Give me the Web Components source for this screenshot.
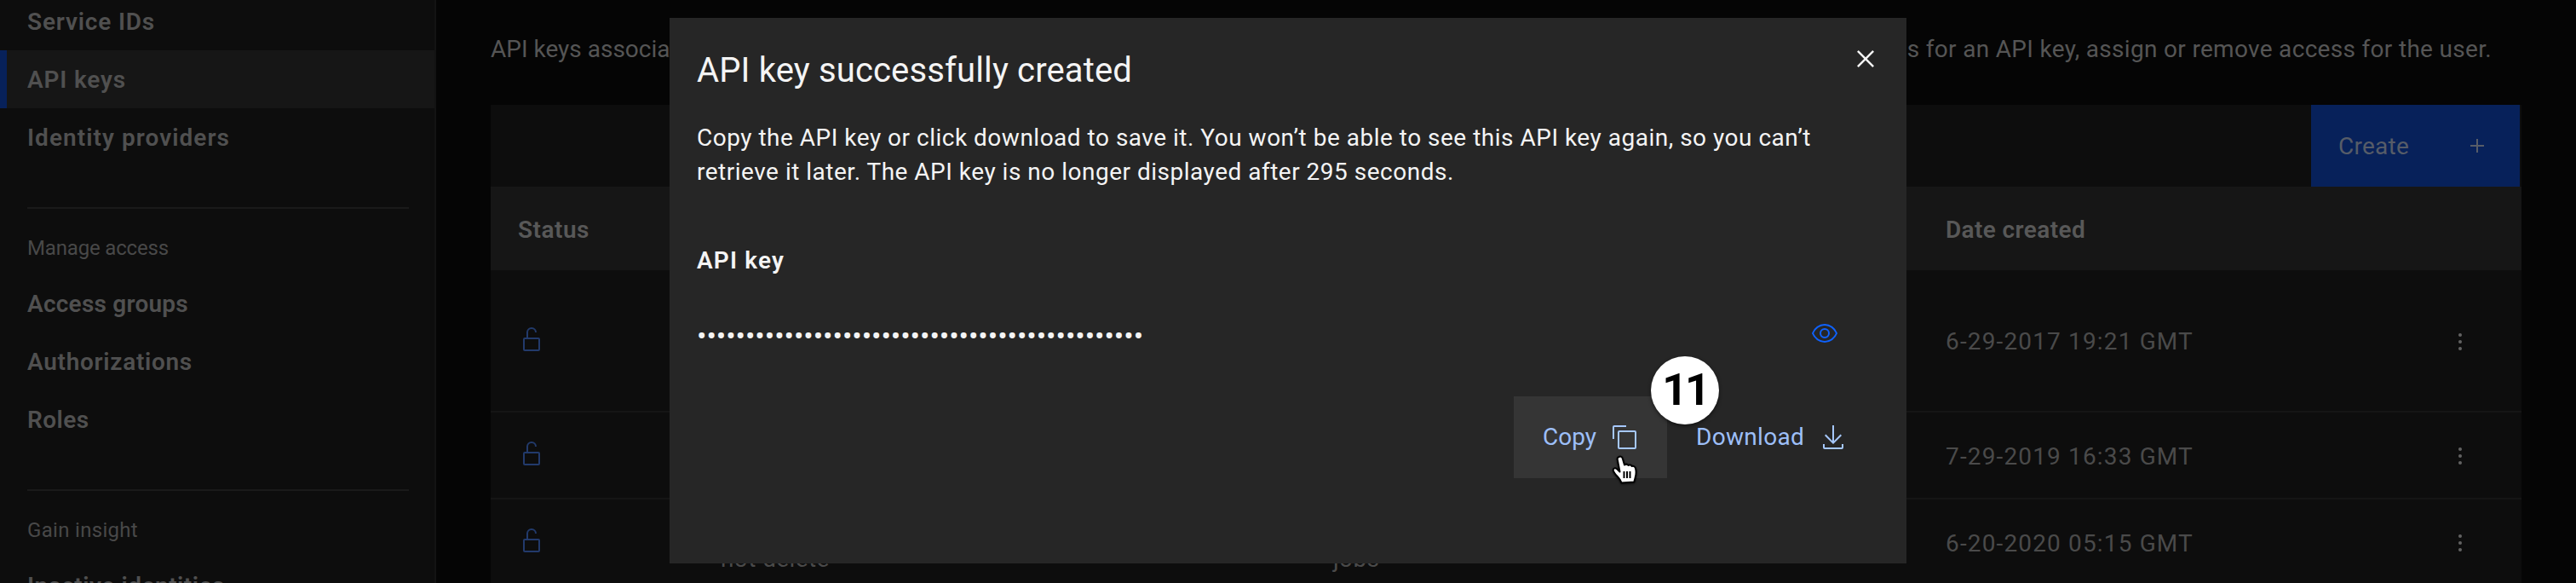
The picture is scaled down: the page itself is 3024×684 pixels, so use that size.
<!DOCTYPE html><html><head><meta charset="utf-8"><style>
html,body{margin:0;padding:0;background:#050505;overflow:hidden}
body{font-family:Roboto,"Liberation Sans",sans-serif}
</style></head><body>
<iam-page>
  <iam-sidebar slot="side">
    <nav-item ls=".81">Service IDs</nav-item>
    <nav-item ls=".83" active>API keys</nav-item>
    <nav-item ls="1.05">Identity providers</nav-item>
    <nav-section ls="-.17">Manage access</nav-section>
    <nav-item ls=".23">Access groups</nav-item>
    <nav-item ls=".7">Authorizations</nav-item>
    <nav-item ls=".45">Roles</nav-item>
    <nav-section ls=".31">Gain insight</nav-section>
    <nav-item ls=".5">Inactive identities</nav-item>
  </iam-sidebar>
  <keys-panel slot="main"></keys-panel>
  <key-modal slot="over"></key-modal>
</iam-page>
<script>
const ICON={
 lock:'<path d="M24 14H12V8a4 4 0 0 1 8 0h2a6 6 0 0 0-12 0v6H8a2 2 0 0 0-2 2v12a2 2 0 0 0 2 2h16a2 2 0 0 0 2-2V16a2 2 0 0 0-2-2zm0 14H8V16h16z"/>',
 kebab:'<circle cx="16" cy="8" r="2"/><circle cx="16" cy="16" r="2"/><circle cx="16" cy="24" r="2"/>',
 add:'<path d="M17 15V8h-2v7H8v2h7v7h2v-7h7v-2h-7z"/>',
 close:'<path d="M24 9.4L22.6 8 16 14.6 9.4 8 8 9.4 14.6 16 8 22.6 9.4 24 16 17.4 22.6 24 24 22.6 17.4 16 24 9.4z"/>',
 view:'<path d="M30.94 15.66A16.69 16.69 0 0 0 16 5 16.69 16.69 0 0 0 1.06 15.66a1 1 0 0 0 0 .68A16.69 16.69 0 0 0 16 27a16.69 16.69 0 0 0 14.94-10.66 1 1 0 0 0 0-.68zM16 25c-5.3 0-10.9-3.93-12.93-9C5.1 10.93 10.7 7 16 7s10.9 3.93 12.93 9C26.9 21.07 21.3 25 16 25z"/><path d="M16 10a6 6 0 1 0 6 6 6 6 0 0 0-6-6zm0 10a4 4 0 1 1 4-4 4 4 0 0 1-4 4z"/>',
 copy:'<path d="M28 10v18H10V10h18m0-2H10a2 2 0 0 0-2 2v18a2 2 0 0 0 2 2h18a2 2 0 0 0 2-2V10a2 2 0 0 0-2-2z"/><path d="M4 18H2V4a2 2 0 0 1 2-2h14v2H4z"/>',
 download:'<path d="M26 24v4H6v-4H4v4a2 2 0 0 0 2 2h20a2 2 0 0 0 2-2v-4z"/><path d="M26 14l-1.41-1.41L17 20.17V2h-2v18.17l-7.59-7.58L6 14l10 10 10-10z"/>'
};
function icon(n,s=32,c='currentColor'){return `<svg width="${s}" height="${s}" viewBox="0 0 32 32" fill="${c}" style="display:block;flex:none">${ICON[n]}</svg>`}
class Base extends HTMLElement{
 render(html){if(!this.shadowRoot)this.attachShadow({mode:'open'});this.shadowRoot.innerHTML=html}
}
customElements.define('iam-page',class extends Base{connectedCallback(){this.render(`<style>
 :host{display:grid;grid-template-columns:512px 1fr;width:3024px;height:684px;overflow:hidden;position:relative;background:#050505}
 </style><slot name="side"></slot><slot name="main"></slot><slot name="over"></slot>`)}});
customElements.define('iam-sidebar',class extends Base{connectedCallback(){this.render(`<style>
 :host{display:block;height:684px;overflow:hidden;background:#0d0d0d;box-shadow:inset -2px 0 0 #131313}
 .list{display:flex;flex-direction:column;margin-top:-9px}
 </style><div class="list"><slot></slot></div>`)}});
customElements.define('nav-item',class extends Base{connectedCallback(){const a=this.hasAttribute('active');this.render(`<style>
 :host{display:flex;align-items:center;flex:none;height:68px;box-sizing:border-box;padding:2px 0 0 ${a?24:32}px;font:600 28px/40px Roboto,sans-serif;color:#505050;letter-spacing:${this.getAttribute('ls')}px;white-space:nowrap;
 ${a?'background:#161616;border-left:8px solid #07215a;margin-right:2px;':''}}
 </style><slot></slot>`)}});
customElements.define('nav-section',class extends Base{connectedCallback(){this.render(`<style>
 :host{display:block;flex:none;margin:48px 32px 0;border-top:2px solid #1a1a1a;padding:30px 0 15px;font:400 24px/32px Roboto,sans-serif;color:#484848;letter-spacing:${this.getAttribute('ls')}px;white-space:nowrap}
 </style><slot></slot>`)}});
customElements.define('key-row',class extends Base{connectedCallback(){
 const h=this.getAttribute('h');
 this.render(`<style>
 :host{display:grid;grid-template-columns:270px 719px 719px 1fr 120px;height:${h}px;box-sizing:border-box;background:#0d0d0d;border-bottom:2px solid #151515;align-items:center;font:400 28px/40px Roboto,sans-serif;color:#4a4a4a}
 .st{padding-left:32px;color:#223a6b;margin-top:-4px}
 .dt{letter-spacing:1.15px;margin-top:3px;white-space:nowrap}
 .km{padding-left:32px;color:#626262;margin-top:2px}
 .tx{letter-spacing:.4px}
 </style>
 <div class="st">${icon('lock')}</div><div class="tx"><slot name="name"></slot></div><div class="tx"><slot name="desc"></slot></div><div class="dt">${this.getAttribute('date')}</div><div class="km">${icon('kebab')}</div>`)}});
customElements.define('keys-panel',class extends Base{connectedCallback(){this.render(`<style>
 :host{display:block;padding:38px 64px 0;height:684px;box-sizing:border-box;overflow:hidden;font-family:Roboto,sans-serif}
 .intro{display:flex;justify-content:space-between;font:400 28px/40px Roboto,sans-serif;color:#555;width:2349px;height:40px;margin-bottom:45px;white-space:nowrap}
 .tool{display:flex;justify-content:flex-end;height:96px;background:#0d0d0d}
 .create{display:flex;align-items:center;width:245px;height:96px;box-sizing:border-box;margin-right:2px;padding:0 34px 0 32px;background:#07215a;color:#565c68;font:400 28px/40px Roboto,sans-serif;letter-spacing:.24px}
 .create span{flex:1;padding-top:2px}
 .head{display:grid;grid-template-columns:270px 719px 719px 1fr;height:98px;box-sizing:border-box;padding-top:3px;background:#161616;align-items:center;font:600 28px/40px Roboto,sans-serif;color:#585858}
 .head div:first-child{padding-left:32px;letter-spacing:.51px}
 .head .d{grid-column:4;letter-spacing:.38px}
 </style>
 <div class="intro"><span>API keys associa</span><span style="letter-spacing:.31px">s for an API key, assign or remove access for the user.</span></div>
 <div class="tool"><div class="create"><span>Create</span>${icon('add')}</div></div>
 <div class="head"><div>Status</div><div class="d">Date created</div></div>
 <key-row h="167" date="6-29-2017 19:21 GMT"></key-row>
 <key-row h="102" date="7-29-2019 16:33 GMT"></key-row>
 <key-row h="102" date="6-20-2020 05:15 GMT"><span slot="name">&nbsp;<br>not delete</span><span slot="desc">&nbsp;<br>jobs</span></key-row>`)}});
customElements.define('step-badge',class extends Base{connectedCallback(){this.render(`<style>
 :host{position:absolute;left:1152px;top:397px;width:80px;height:80px;border-radius:50%;background:#fff;box-shadow:0 2px 4px rgba(0,0,0,.5);display:flex;align-items:center;justify-content:center;font:700 52px/1 Roboto,sans-serif;color:#000;letter-spacing:-3px;z-index:3}
 </style><slot></slot>`)}});
customElements.define('hand-cursor',class extends Base{connectedCallback(){this.render(`<style>
 :host{position:absolute;left:1106px;top:513px;width:32px;height:34px;z-index:4;filter:drop-shadow(0 1px 1px rgba(0,0,0,.6))}
 svg{display:block}
 </style><svg width="32" height="34" viewBox="0 0 32 34">
 <path d="M8.500 2C10.500 1 12.300 2 12.800 4L15 11.500C16.500 10.500 18.500 10.500 19.500 12C21 11 23 11.500 23.700 13C25.500 12.300 27.500 13.500 28 15.500C29 19.500 28.800 23 27.500 27L26.300 31.500L11.500 32.500L9.500 28.500C6.500 24.500 2.800 21.500 1.800 18C1.400 15 4.500 14.500 6.500 16.500L9.500 19.500L6.700 5C6.400 3.600 7.200 2.500 8.500 2Z" fill="#fff" stroke="#000" stroke-width="2" stroke-linejoin="round"/>
 <path d="M14.500 19v8M18 19v8M21.500 19v8" stroke="#000" stroke-width="2" fill="none"/></svg>`)}});
customElements.define('link-btn',class extends Base{connectedCallback(){const h=this.hasAttribute('hover');this.render(`<style>
 :host{display:flex;align-items:center;flex:none;height:96px;box-sizing:border-box;width:${this.getAttribute('w')}px;padding:0 34px;font:400 28px/40px Roboto,sans-serif;color:#9dbff8;letter-spacing:${this.getAttribute('ls')}px;${h?'background:#353535;':''}}
 span{flex:1}
 </style><span><slot></slot></span><div style="color:#a6c8ff">${icon(this.getAttribute('icon'))}</div>`)}});
customElements.define('key-modal',class extends Base{connectedCallback(){this.render(`<style>
 :host{position:absolute;left:786px;top:21px;width:1452px;height:640px;box-sizing:border-box;background:#262626;padding:34px 0 0 32px;color:#f4f4f4;font-family:Roboto,sans-serif;z-index:2}
 h2{margin:0 0 31px;font:400 40px/56px Roboto,sans-serif;letter-spacing:.14px;white-space:nowrap}
 p{margin:0;font:400 28px/40px Roboto,sans-serif;letter-spacing:.5px;white-space:nowrap}
 .label{margin-top:64px;font:600 28px/40px Roboto,sans-serif;letter-spacing:1.15px}
 .key{display:flex;justify-content:space-between;align-items:center;margin-top:48px;padding-right:80px;height:40px}
 .dots{font:400 34px/40px Roboto,sans-serif;white-space:nowrap;letter-spacing:-.08px}
 .eye{color:#0f62fe;margin-top:-6px}
 .act{display:flex;justify-content:flex-end;margin-top:51px;padding-right:36px}
 .close{position:absolute;right:28px;top:28px;color:#f4f4f4}
 </style>
 <h2>API key successfully created</h2>
 <p>Copy the API key or click download to save it. You won’t be able to see this API key again, so you can’t</p>
 <p>retrieve it later. The API key is no longer displayed after 295 seconds.</p>
 <div class="label">API key</div>
 <div class="key"><span class="dots">••••••••••••••••••••••••••••••••••••••••••••••</span><div class="eye">${icon('view')}</div></div>
 <div class="act"><link-btn w="180" ls="0" icon="copy" hover>Copy</link-btn><link-btn w="245" ls=".3" icon="download">Download</link-btn></div>
 <div class="close">${icon('close',40)}</div>
 <step-badge>11</step-badge><hand-cursor></hand-cursor>`)}});
</script></body></html>
